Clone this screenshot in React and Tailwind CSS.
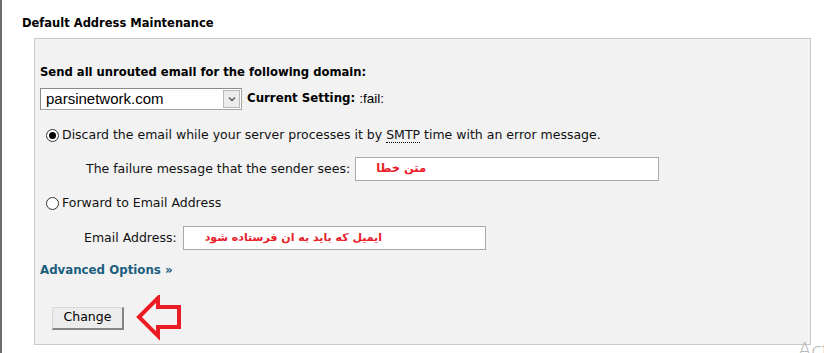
export default function App() {
  const font = { fontFamily: "'DejaVu Sans', Verdana, sans-serif" };
  return (
    <div
      className="relative w-[824px] h-[353px] overflow-hidden bg-white border-l-2 border-[#6b6b6b] text-[12.5px] text-[#111]"
      style={font}
    >
      {/* Heading */}
      <h2 className="pl-[20px] pt-[15px] text-[11.5px] font-bold leading-[16px] text-black">
        Default Address Maintenance
      </h2>

      {/* Panel */}
      <div className="ml-[32px] mt-[7px] w-[777px] h-[307px] bg-[#f2f2f2] border border-[#c9c9c9] pl-[5px] pt-[25px]">
        <div className="text-[11.6px] font-bold leading-[16px] text-black">
          Send all unrouted email for the following domain:
        </div>

        <div className="mt-[8px] flex items-center">
          <div className="flex h-[22px] w-[202px] items-center border border-[#a5a5a5] border-t-[#8a8a8a] border-l-[#8a8a8a] bg-white">
            <span
              className="flex-1 pl-[5px] text-[15px] leading-[20px] text-black"
              style={{ fontFamily: "'Liberation Sans', Arial, sans-serif" }}
            >
              parsinetwork.com
            </span>
            <span className="mr-[1px] flex h-[18px] w-[17px] items-center justify-center border border-[#b8b8b8] bg-[#ececec]">
              <svg width="8" height="6" viewBox="0 0 8 6">
                <path d="M1 1.5 L4 4.5 L7 1.5" fill="none" stroke="#555" strokeWidth="1.4" />
              </svg>
            </span>
          </div>
          <span className="ml-[5px] text-[11.8px] font-bold text-black">Current Setting:</span>
          <span
            className="ml-[4px] text-[13.5px] text-black"
            style={{ fontFamily: "'Liberation Sans', Arial, sans-serif" }}
          >
            :fail:
          </span>
        </div>

        {/* Option 1 */}
        <div className="mt-[17px] flex items-center pl-[6px]">
          <span className="flex h-[13px] w-[13px] items-center justify-center rounded-full border border-[#333] bg-white">
            <span className="h-[7px] w-[7px] rounded-full bg-black" />
          </span>
          <span className="ml-[3px] leading-[16px]">
            Discard the email while your server processes it by{" "}
            <span className="border-b border-dotted border-black">SMTP</span> time with an error
            message.
          </span>
        </div>

        <div className="mt-[14px] flex items-center pl-[46px]">
          <span>The failure message that the sender sees:</span>
          <div className="ml-[5px] flex h-[24px] w-[304px] items-center border border-[#a9a9a9] bg-white pl-[20px]">
            <span className="text-[11.5px] font-bold text-[#e8202a]" dir="rtl">
              متن خطا
            </span>
          </div>
        </div>

        {/* Option 2 */}
        <div className="mt-[14px] flex items-center pl-[6px]">
          <span className="h-[13px] w-[13px] rounded-full border border-[#333] bg-white" />
          <span className="ml-[3px] leading-[16px]">Forward to Email Address</span>
        </div>

        <div className="mt-[15px] flex items-center pl-[44px]">
          <span>Email Address:</span>
          <div className="ml-[6px] flex h-[24px] w-[303px] items-center border border-[#a9a9a9] bg-white pl-[21px]">
            <span className="text-[11px] font-bold text-[#e8202a]" dir="rtl">
              ایمیل که باید به ان فرستاده شود
            </span>
          </div>
        </div>

        <div className="mt-[12px] font-bold text-[11.8px] leading-[16px] text-[#1b5f7e]">
          Advanced Options »
        </div>

        <div className="mt-[17px] flex items-center pl-[12px]">
          <button className="h-[23px] w-[72px] border border-[#d8d8d8] border-r-2 border-b-2 border-r-[#858585] border-b-[#858585] bg-[#ececec] text-[12.5px] text-black">
            Change
          </button>
          <svg className="ml-[12px]" width="48" height="46" viewBox="0 0 48 46">
            <path
              d="M3 22 L22 3 L22 12 L43 12 L43 32 L22 32 L22 41 Z"
              fill="none"
              stroke="#ec1c24"
              strokeWidth="4"
              strokeLinejoin="miter"
            />
          </svg>
        </div>
      </div>

      {/* Watermark overlay */}
      <div
        className="absolute left-[796px] top-[338px] text-[22px] leading-none text-[#b8b8b8] whitespace-nowrap"
        style={{ fontFamily: "'Open Sans', sans-serif", fontWeight: 300 }}
      >
        Activate Windows
      </div>
    </div>
  );
}
